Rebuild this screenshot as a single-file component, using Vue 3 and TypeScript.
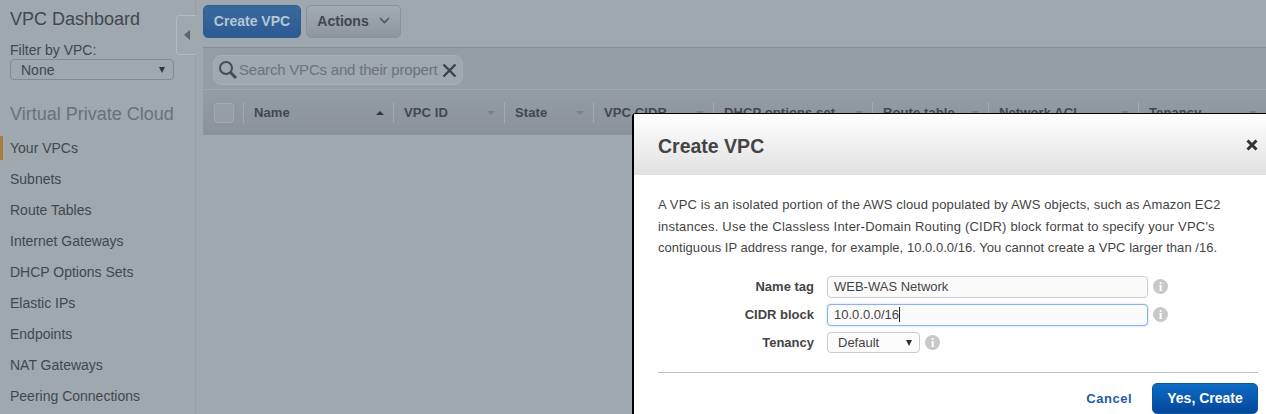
<script setup lang="ts">
const navItems: string[] = ['Your VPCs', 'Subnets', 'Route Tables', 'Internet Gateways', 'DHCP Options Sets', 'Elastic IPs', 'Endpoints', 'NAT Gateways', 'Peering Connections']
const columns: { name: string; width: number; dark?: boolean }[] = [
  { name: 'Name', width: 150, dark: true },
  { name: 'VPC ID', width: 111 },
  { name: 'State', width: 89 },
  { name: 'VPC CIDR', width: 120 },
  { name: 'DHCP options set', width: 159 },
  { name: 'Route table', width: 116 },
  { name: 'Network ACL', width: 150 },
  { name: 'Tenancy', width: 128 },
]
</script>

<template>
  <div class="page">
    <aside class="sidebar">
      <h1 class="dash">VPC Dashboard</h1>
      <div class="filter-label">Filter by VPC:</div>
      <div class="filter-select"><span>None</span><i class="tri"></i></div>
      <h2 class="section">Virtual Private Cloud</h2>
      <nav class="nav">
        <a v-for="(item, i) in navItems" :key="item" class="nav-item" :class="{ active: i === 0 }">{{ item }}</a>
      </nav>
      <div class="collapse"><i></i></div>
    </aside>

    <main class="main">
      <div class="toolbar">
        <button class="btn primary">Create VPC</button>
        <button class="btn secondary">Actions
          <svg width="11" height="7" viewBox="0 0 11 7"><path d="M1 1l4.5 4.5L10 1" fill="none" stroke="#4f565d" stroke-width="1.6"/></svg>
        </button>
      </div>
      <div class="search-band">
        <div class="search">
          <svg width="20" height="20" viewBox="0 0 20 20"><circle cx="8" cy="8" r="6" fill="none" stroke="#444b52" stroke-width="2"/><path d="M12.5 12.5l5.5 5.5" stroke="#444b52" stroke-width="3"/></svg>
          <span class="placeholder">Search VPCs and their propert</span>
          <svg class="clear" width="15" height="15" viewBox="0 0 15 15"><path d="M1.5 1.5l12 12M13.5 1.5l-12 12" stroke="#3c4249" stroke-width="2.4"/></svg>
        </div>
      </div>
      <div class="thead">
        <div class="check-cell"><span class="check"></span></div>
        <div v-for="c in columns" :key="c.name" class="th" :style="{ width: c.width + 'px' }">
          <span>{{ c.name }}</span>
          <i class="sort" :class="{ up: c.dark }"></i>
        </div>
      </div>
    </main>

    <section class="modal">
      <header class="modal-head">
        <h3>Create VPC</h3>
        <svg class="close" width="12" height="12" viewBox="0 0 12 12"><path d="M1.5 1.5l9 9M10.5 1.5l-9 9" stroke="#333" stroke-width="3"/></svg>
      </header>
      <div class="modal-body">
        <p>
          <span class="l1">A VPC is an isolated portion of the AWS cloud populated by AWS objects, such as Amazon EC2</span>
          <span class="l2">instances. Use the Classless Inter-Domain Routing (CIDR) block format to specify your VPC's</span>
          <span class="l3">contiguous IP address range, for example, 10.0.0.0/16. You cannot create a VPC larger than /16.</span>
        </p>
        <div class="form">
          <div class="row">
            <label>Name tag</label>
            <div class="input">WEB-WAS Network</div>
            <span class="info">i</span>
          </div>
          <div class="row">
            <label>CIDR block</label>
            <div class="input focus">10.0.0.0/16<span class="caret"></span></div>
            <span class="info">i</span>
          </div>
          <div class="row">
            <label>Tenancy</label>
            <div class="tenancy"><span>Default</span><i class="tri dark"></i></div>
            <span class="info">i</span>
          </div>
        </div>
        <div class="rule"></div>
        <div class="actions">
          <a class="cancel">Cancel</a>
          <button class="yes">Yes, Create</button>
        </div>
      </div>
    </section>
  </div>
</template>

<style>
html, body { margin: 0; background: #9fa7af; overflow: hidden; }
</style>

<style scoped>
.page {
  position: relative;
  display: flex;
  width: 1266px;
  height: 414px;
  overflow: hidden;
  background: #9fa7af;
  font-family: "Liberation Sans", Arial, sans-serif;
  color: #42474d;
}
.sidebar {
  position: relative;
  flex: 0 0 196px;
  box-sizing: border-box;
  height: 414px;
  border-right: 1px solid #969ea6;
}
.dash { margin: 9px 0 0 10px; font-size: 18px; line-height: 21px; font-weight: 400; color: #42474d; }
.filter-label { margin: 12px 0 0 10px; font-size: 14px; line-height: 17px; }
.filter-select {
  box-sizing: border-box;
  display: flex;
  align-items: center;
  justify-content: space-between;
  width: 164px;
  height: 21px;
  margin: 0 0 0 10px;
  padding: 0 8px 0 10px;
  border: 1px solid #838a92;
  border-radius: 4px;
  font-size: 14px;
}
.tri { width: 0; height: 0; border-left: 3.5px solid transparent; border-right: 3.5px solid transparent; border-top: 6px solid #33383d; }
.section { margin: 23px 0 0 10px; font-size: 18px; line-height: 22px; font-weight: 400; color: #6a7178; }
.nav { margin-top: 8px; display: flex; flex-direction: column; }
.nav-item { height: 31px; line-height: 30px; padding-left: 10px; font-size: 14px; position: relative; }
.nav-item.active::before { content: ""; position: absolute; left: 0; top: 3px; width: 3px; height: 24px; background: #a87c3a; }
.collapse {
  position: absolute;
  left: 176px;
  top: 15px;
  box-sizing: border-box;
  width: 20px;
  height: 40px;
  background: #9fa7af;
  border: 1px solid #b3bac1;
  border-right: 0;
  border-radius: 4px 0 0 4px;
  display: flex;
  align-items: center;
  justify-content: center;
}
.collapse i { width: 0; height: 0; border-top: 5.5px solid transparent; border-bottom: 5.5px solid transparent; border-right: 6px solid #5e656c; }
.main { flex: 1; margin-left: 7px; min-width: 0; }
.toolbar { display: flex; gap: 5px; height: 47px; padding-top: 5px; box-sizing: border-box; }
.btn {
  box-sizing: border-box;
  height: 33px;
  border-radius: 5px;
  font-family: inherit;
  font-size: 14px;
  font-weight: 700;
  padding: 0 0 2px;
}
.primary { width: 98px; color: #b4c6d6; background: linear-gradient(#3a6a9d, #2a5a92); border: 1px solid #2d5c8f; }
.secondary { width: 95px; color: #42474d; background: linear-gradient(#a3abb3, #8e959d); border: 1px solid #8b929a; display: flex; align-items: center; justify-content: center; gap: 10px; }
.search-band {
  box-sizing: border-box;
  height: 43px;
  padding: 7px 0 0 10px;
  background: #949ca4;
  border-top: 1px solid #868d95;
  border-bottom: 1px solid #a0a7af;
}
.search {
  box-sizing: border-box;
  display: flex;
  align-items: center;
  width: 250px;
  height: 30px;
  padding: 0 5px 0 4px;
  background: #9fa7af;
  border: 1px solid #a6adb5;
  border-radius: 8px;
}
.search svg { flex: none; }
.placeholder { flex: 1; min-width: 0; margin-left: 1px; padding-bottom: 2px; white-space: nowrap; font-size: 15px; letter-spacing: -0.2px; color: #6c7379; }
.thead {
  box-sizing: border-box;
  display: flex;
  align-items: center;
  height: 46px;
  background: linear-gradient(#959da4, #8a9199);
  border-bottom: 1px solid #a1a8b0;
  overflow: hidden;
}
.check-cell { flex: 0 0 40px; padding-left: 11px; box-sizing: border-box; display: flex; }
.check { width: 18px; height: 18px; border: 1px solid #a3aab1; border-radius: 4px; background: #969da5; }
.th {
  flex: none;
  box-sizing: border-box;
  display: flex;
  align-items: center;
  justify-content: space-between;
  height: 21px;
  padding: 0 9px 0 10px;
  border-left: 1px solid #a3aab1;
  font-size: 13px;
  font-weight: 700;
  letter-spacing: 0.1px;
  color: #42474d;
}
.sort { width: 0; height: 0; border-left: 4px solid transparent; border-right: 4px solid transparent; border-top: 4px solid #7a8188; }
.sort.up { border-top: 0; border-bottom: 4px solid #33383d; }
.modal {
  position: absolute;
  left: 632px;
  top: 113px;
  width: 640px;
  height: 320px;
  box-sizing: border-box;
  background: #fff;
  border: 2px solid #000;
  border-width: 1px 0 0 2px;
  border-top-left-radius: 4px;
  color: #444;
}
.modal-head {
  box-sizing: border-box;
  display: flex;
  align-items: center;
  justify-content: space-between;
  height: 61px;
  padding: 4px 14px 0 24px;
  background: linear-gradient(#fff, #e1e1e1);
}
.modal-head h3 { margin: 0; font-size: 19.5px; font-weight: 700; color: #444; }
.close { margin-top: -3px; }
.modal-body { padding: 19px 14px 0 24px; }
.modal-body p { margin: 0; font-size: 13px; line-height: 21.5px; white-space: nowrap; color: #444; }
.modal-body p span { display: block; }
.l1 { letter-spacing: 0.135px; }
.l2 { letter-spacing: 0.2px; }
.l3 { letter-spacing: 0.03px; }
.form { margin-top: 17px; display: flex; flex-direction: column; gap: 6px; }
.row { display: flex; align-items: center; height: 22px; }
.row label { width: 156px; text-align: right; font-size: 13px; font-weight: 700; color: #444; }
.input {
  box-sizing: border-box;
  width: 321px;
  height: 22px;
  margin-left: 13px;
  padding-left: 6px;
  line-height: 20px;
  font-size: 13px;
  background: #fbfbfb;
  border: 1px solid #ccc;
  border-radius: 4px;
  color: #444;
}
.input.focus { border-color: #8ab1ee; box-shadow: 0 0 2px #a9c6f3; }
.caret { display: inline-block; width: 1px; height: 15px; background: #222; vertical-align: -3px; }
.info {
  display: inline-block;
  flex: none;
  width: 15px;
  height: 15px;
  margin-left: 5px;
  border-radius: 50%;
  background: #c8c8c8;
  color: #fff;
  font: 700 13px/15px "Liberation Serif", serif;
  text-align: center;
}
.tenancy {
  box-sizing: border-box;
  display: flex;
  align-items: center;
  justify-content: space-between;
  width: 93px;
  height: 21px;
  margin-left: 13px;
  padding: 0 7px 0 10px;
  font-size: 13px;
  background: #fcfcfc;
  border: 1px solid #ccc;
  border-radius: 4px;
}
.tri.dark { border-top-color: #333; }
.rule { margin-top: 18px; height: 1px; background: #bfbfbf; }
.actions { display: flex; align-items: center; justify-content: flex-end; margin-top: 10px; gap: 20px; }
.cancel { font-size: 13px; font-weight: 700; letter-spacing: 0.5px; color: #1f5aa6; }
.yes {
  box-sizing: border-box;
  width: 106px;
  height: 31px;
  padding: 0;
  border: 1px solid #0a56a6;
  border-radius: 5px;
  background: linear-gradient(#0d6bc4, #04479b);
  color: #fff;
  font-family: inherit;
  font-size: 14px;
  font-weight: 700;
}
</style>
